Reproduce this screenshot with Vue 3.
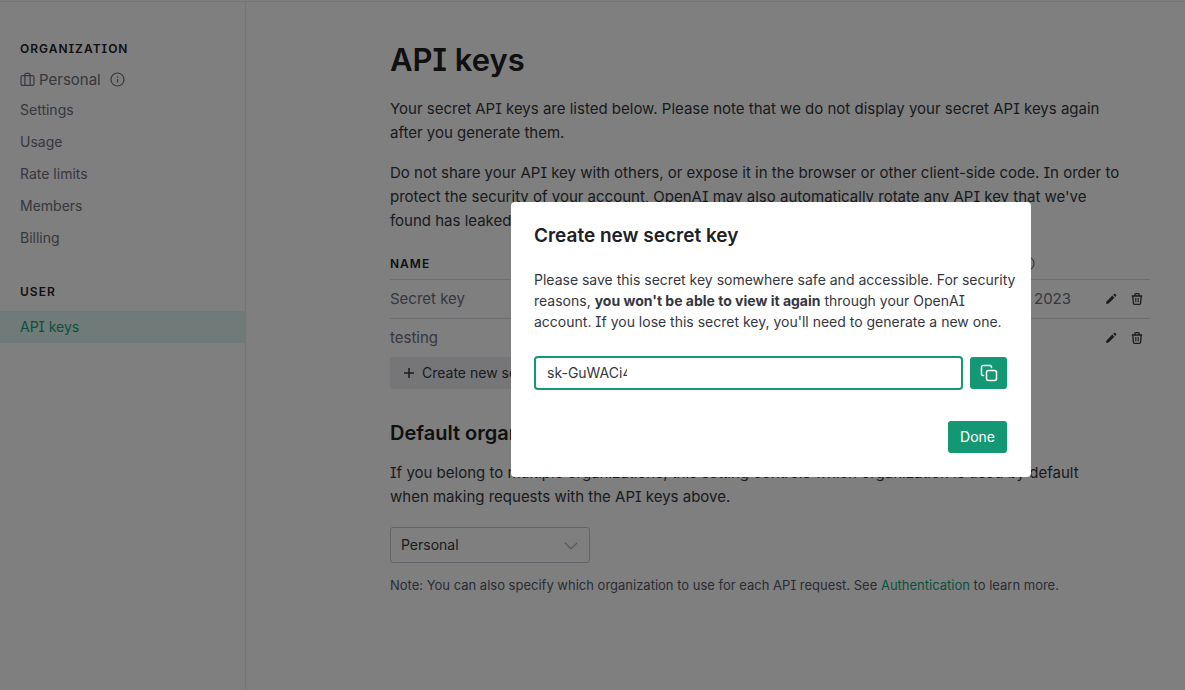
<script setup>
import { ref } from 'vue'

const orgLinks = ['Settings', 'Usage', 'Rate limits', 'Members', 'Billing']
const keys = [
  { name: 'Secret key', used: '2023' },
  { name: 'testing', used: '' },
]
const secret = ref('sk-GuWACi4')
const organization = ref('Personal')
</script>

<template>
  <div class="page">
    <header class="topbar"></header>
    <div class="layout">
      <nav class="sidebar" aria-label="Account">
        <h2 class="group">Organization</h2>
        <div class="org">
          <svg class="brief" viewBox="0 0 15 15" fill="none" stroke="currentColor" stroke-width="1.2" aria-hidden="true">
            <rect x="1" y="3.6" width="13" height="9.8" rx="1.6" />
            <path d="M4.9 13.4V2.8a1.4 1.4 0 0 1 1.4-1.4h2.4a1.4 1.4 0 0 1 1.4 1.4v10.6" />
          </svg>
          <span>Personal</span>
          <svg class="info" viewBox="0 0 15 15" fill="none" stroke="currentColor" stroke-width="1.2" aria-hidden="true">
            <circle cx="7.5" cy="7.5" r="6.5" />
            <path d="M7.5 7v3.6M7.5 4.2v1.3" />
          </svg>
        </div>
        <a v-for="l in orgLinks" :key="l" class="link" href="#">{{ l }}</a>
        <h2 class="group user">User</h2>
        <a class="link active" href="#">API keys</a>
      </nav>

      <main class="main">
        <h1>API keys</h1>
        <p>Your secret API keys are listed below. Please note that we do not display your secret API keys again<br>after you generate them.</p>
        <p>Do not share your API key with others, or expose it in the browser or other client-side code. In order to<br>protect the security of your account, OpenAI may also automatically rotate any API key that we've<br>found has leaked publicly.</p>

        <table class="keys">
          <thead>
            <tr>
              <th class="name">Name</th>
              <th class="used">
                <svg class="info" viewBox="0 0 15 15" fill="none" stroke="currentColor" stroke-width="1.2" aria-hidden="true">
                  <circle cx="7.5" cy="7.5" r="6.5" />
                  <path d="M7.5 7v3.6M7.5 4.2v1.3" />
                </svg>
              </th>
              <th class="tools"></th>
            </tr>
          </thead>
          <tbody>
            <tr v-for="k in keys" :key="k.name">
              <td>{{ k.name }}</td>
              <td class="used">{{ k.used }}</td>
              <td class="tools">
                <div class="actions">
                  <button type="button" class="icon" aria-label="Edit">
                    <svg viewBox="0 0 12 12" fill="currentColor" aria-hidden="true">
                      <path d="M1 11l.5-2.6L7.3 2.6l2.1 2.1-5.8 5.8z" />
                      <path d="M8.2 1.8l.9-.8a.9.9 0 0 1 1.2 0l.8.8a.9.9 0 0 1 0 1.2l-.8.9z" />
                    </svg>
                  </button>
                  <button type="button" class="icon" aria-label="Delete">
                    <svg viewBox="0 0 12 12" fill="none" stroke="currentColor" stroke-width="1.3" aria-hidden="true">
                      <path d="M.8 3h10.4M1.8 3l.6 7.2a1.2 1.2 0 0 0 1.2 1.1h4.8a1.2 1.2 0 0 0 1.2-1.1L10.2 3M3.8 3V1.7a1 1 0 0 1 1-1h2.4a1 1 0 0 1 1 1V3" />
                      <path d="M4.8 5v4.2M7.2 5v4.2" stroke-width="1.1" />
                    </svg>
                  </button>
                </div>
              </td>
            </tr>
          </tbody>
        </table>
        <button type="button" class="create">
          <svg viewBox="0 0 12 12" stroke="currentColor" stroke-width="1.5" aria-hidden="true"><path d="M6 1v10M1 6h10" /></svg>
          Create new secret key
        </button>

        <h2 class="title">Default organization</h2>
        <p>If you belong to multiple organizations, this setting controls which organization is used by default<br>when making requests with the API keys above.</p>
        <div class="picker">
          <select v-model="organization" aria-label="Default organization">
            <option>Personal</option>
          </select>
          <svg class="chevron" viewBox="0 0 14 8" fill="none" stroke="currentColor" stroke-width="1.2" aria-hidden="true"><path d="M1 1l6 6 6-6" /></svg>
        </div>
        <p class="note">Note: You can also specify which organization to use for each API request. See <a href="#">Authentication</a> to learn more.</p>
      </main>
    </div>

    <div class="overlay">
      <section class="modal" role="dialog" aria-modal="true" aria-labelledby="dialog-title">
        <h2 id="dialog-title">Create new secret key</h2>
        <p>Please save this secret key somewhere safe and accessible. For security<br>reasons, <b>you won't be able to view it again</b> through your OpenAI<br>account. If you lose this secret key, you'll need to generate a new one.</p>
        <div class="field">
          <input v-model="secret" type="text" aria-label="Secret key" readonly>
          <button type="button" class="primary copy" aria-label="Copy">
            <svg viewBox="0 0 18 18" fill="none" stroke="currentColor" stroke-width="1.5" stroke-linecap="round" stroke-linejoin="round" aria-hidden="true">
              <rect x="6.5" y="6.5" width="10" height="10" rx="2" />
              <path d="M3.5 11.5H3a1.5 1.5 0 0 1-1.5-1.5V3A1.5 1.5 0 0 1 3 1.5h7A1.5 1.5 0 0 1 11.5 3v.5" />
            </svg>
          </button>
        </div>
        <button type="button" class="primary done">Done</button>
      </section>
    </div>
  </div>
</template>

<style>
body {
  margin: 0;
  background: #fff;
}
</style>

<style scoped>
.page {
  min-height: 100vh;
  display: flex;
  flex-direction: column;
  font-family: Inter, Roboto, sans-serif;
  font-feature-settings: "cv08";
  color: #353740;
  white-space: nowrap;
  overflow: hidden;
}
* {
  box-sizing: border-box;
}
button,
input,
select {
  font: inherit;
  font-feature-settings: inherit;
  color: inherit;
}
svg {
  display: block;
  flex: none;
}
h1,
h2,
p {
  margin: 0;
}
a {
  color: #10a37f;
  text-decoration: none;
}
.topbar {
  height: 2px;
  border-bottom: 1px solid #ececf1;
}
.layout {
  flex: 1;
  display: flex;
}
.sidebar {
  width: 246px;
  flex: none;
  padding-top: 39px;
  border-right: 1px solid #ececf1;
  color: #6e6e80;
}
.group {
  padding: 0 20px;
  font-size: 12px;
  line-height: 16px;
  font-weight: 600;
  letter-spacing: 1px;
  text-transform: uppercase;
  color: #202123;
}
.group.user {
  margin: 30px 0 11px;
}
.org {
  display: flex;
  align-items: center;
  height: 30px;
  margin-top: 7px;
  padding: 0 20px;
  font-size: 15px;
}
.brief {
  width: 15px;
  height: 15px;
  margin-right: 4px;
}
.info {
  width: 15px;
  height: 15px;
}
.org .info {
  margin-left: 9px;
}
.link {
  display: block;
  padding: 0 20px;
  line-height: 32px;
  font-size: 14px;
  color: #6e6e80;
}
.link.active {
  background: #e0f5f0;
  color: #10a37f;
}
.main {
  flex: 1;
  max-width: 904px;
  padding: 38px 0 24px 144px;
  font-size: 15px;
  line-height: 24px;
}
h1 {
  font-size: 31px;
  line-height: 40px;
  font-weight: 600;
  color: #202123;
  margin-bottom: 17px;
}
.main p {
  margin-bottom: 16px;
}
.keys {
  width: 100%;
  border-collapse: collapse;
  color: #6e6e80;
}
.keys th {
  height: 30px;
  padding: 0;
  text-align: left;
  font-size: 12px;
  font-weight: 600;
  letter-spacing: 1px;
  text-transform: uppercase;
}
.keys th.name {
  color: #202123;
}
.keys td {
  height: 39px;
  padding: 0;
  border-top: 1px solid #d9d9e3;
}
.keys .used {
  width: 130px;
}
.keys th.used {
  padding-left: 45px;
}
.keys td.used {
  padding-left: 59px;
}
.keys .tools {
  width: 45px;
}
.actions {
  display: flex;
  gap: 14px;
}
.icon {
  display: block;
  padding: 0;
  border: 0;
  background: none;
  color: #353740;
}
.icon svg {
  width: 12px;
  height: 12px;
}
.create {
  display: flex;
  align-items: center;
  gap: 7px;
  height: 32px;
  padding: 0 13px;
  border: 0;
  border-radius: 3px;
  background: #ececf1;
  font-size: 14px;
}
.create svg {
  width: 12px;
  height: 12px;
}
.title {
  margin: 30px 0 14px;
  font-size: 20px;
  line-height: 28px;
  font-weight: 600;
  color: #202123;
}
.picker {
  position: relative;
  width: 200px;
  margin-top: 18px;
}
.picker select {
  display: block;
  width: 100%;
  height: 36px;
  padding: 0 10px;
  border: 1px solid #c5c5d2;
  border-radius: 3px;
  background: none;
  appearance: none;
  font-size: 14px;
}
.chevron {
  position: absolute;
  right: 12px;
  top: 15px;
  width: 14px;
  height: 8px;
  color: #acacbe;
  pointer-events: none;
}
.main .note {
  margin: 10px 0 0;
  font-size: 13px;
  color: #565869;
}
.overlay {
  position: fixed;
  inset: 0;
  display: flex;
  justify-content: center;
  align-items: flex-start;
  padding: 202px 0 0 357px;
  background: rgba(0, 0, 0, 0.5);
}
.modal {
  width: 520px;
  padding: 24px 24px 24px 23px;
  border-radius: 4px;
  background: #fff;
}
.modal h2 {
  font-size: 19px;
  line-height: 20px;
  font-weight: 600;
  color: #202123;
}
.modal p {
  margin: 23px 0 24px;
  font-size: 14px;
  line-height: 21px;
}
.field {
  display: flex;
  align-items: center;
  gap: 7px;
}
.field input {
  flex: 1;
  min-width: 0;
  height: 34px;
  padding: 0 334px 2px 11px;
  border: 2px solid #149873;
  border-radius: 4px;
  outline: 0;
  background: #fff;
  font-size: 14px;
}
.primary {
  display: flex;
  align-items: center;
  justify-content: center;
  height: 32px;
  border: 0;
  border-radius: 3px;
  background: #149873;
  color: #fff;
  font-size: 14px;
}
.copy {
  width: 37px;
  padding: 0;
}
.copy svg {
  width: 18px;
  height: 18px;
}
.done {
  margin: 31px 0 0 auto;
  padding: 0 12px 2px;
}
</style>
